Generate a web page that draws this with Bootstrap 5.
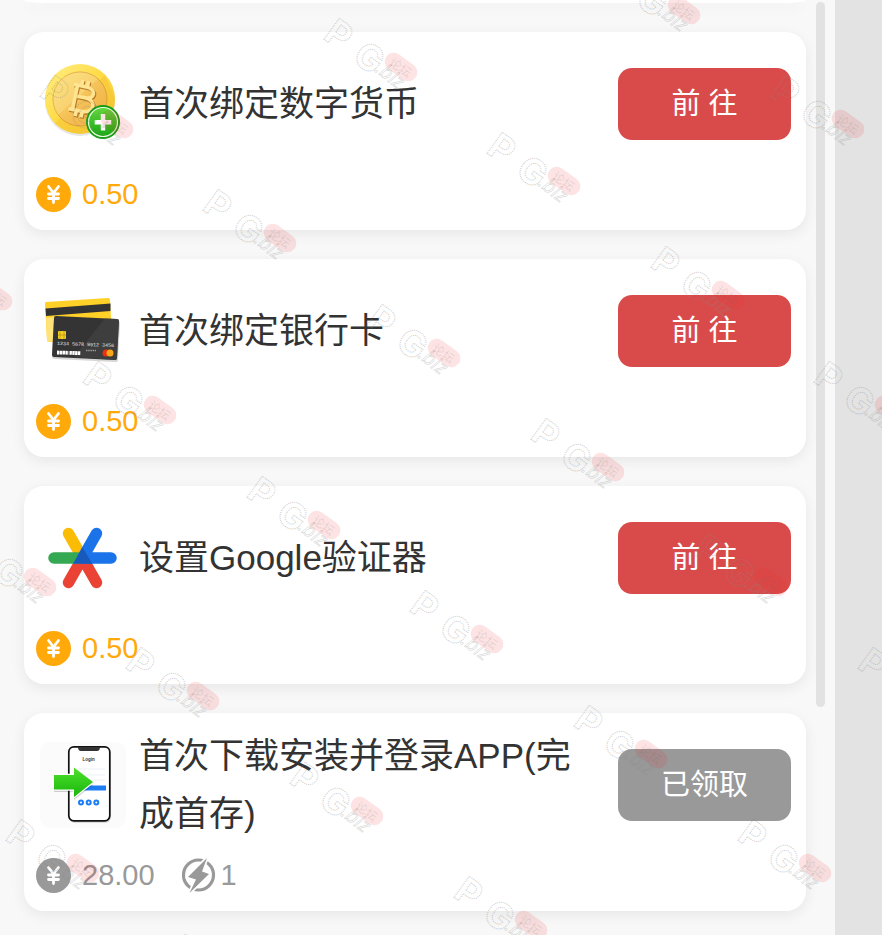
<!DOCTYPE html>
<html lang="zh-CN">
<head>
<meta charset="utf-8">
<meta name="viewport" content="width=device-width, initial-scale=1">
<title>任务</title>
<link rel="stylesheet" href="https://cdn.jsdelivr.net/npm/bootstrap@5.3.0/dist/css/bootstrap.min.css">
<style>
body { background: #e3e3e3; font-family: "Liberation Sans", "Noto Sans CJK SC", sans-serif; color: #333; }
.panel { background: #f8f8f8; margin-right: 47px; padding-left: 24px; padding-right: 10px; gap: 10px; }
.task-list { gap: 29px; min-width: 0; }
.task { background: #fff; border-radius: 20px; box-shadow: 0 4px 14px rgba(0,0,0,.07); height: 198px; padding: 14px 15px 0 12px; flex: none; }
.task-above { height: 3px; border-radius: 0 0 20px 20px / 0 0 3px 3px; padding: 0; margin: 0; }
.task-main { height: 116px; padding-left: 4px; }
.task-icon { width: 86px; height: 86px; flex: none; margin-right: 13px; }
.task-title { font-size: 35px; line-height: 58px; font-weight: 400; margin: 0; padding-right: 24px; }
.btn-task { width: 173px; height: 72px; flex: none; border: 0; border-radius: 14px; font-size: 29px; line-height: 36px; color: #fff; background: #d94b4a; padding: 0; }
.btn-task:hover { color: #fff; background: #c94342; }
.btn-task:disabled { background: #999; color: #fff; opacity: 1; }
.reward { height: 35px; margin-top: 15px; font-size: 29px; line-height: 35px; color: #ffa90a; }
.reward.claimed { color: #999; }
.coin { width: 35px; height: 35px; margin-right: 11px; }
.bolt { width: 35px; height: 35px; margin-left: 27px; margin-right: 4px; }
.thumb { width: 9px; height: calc(75vh + 4px); margin-top: 2px; border-radius: 5px; background: #e2e2e2; flex: none; }
.marks { pointer-events: none; z-index: 5; }
</style>
<script src="https://cdn.jsdelivr.net/npm/bootstrap@5.3.0/dist/js/bootstrap.bundle.min.js"></script>
</head>
<body class="vh-100 overflow-hidden position-relative">

<svg width="0" height="0" class="position-absolute" aria-hidden="true">
  <symbol id="yen" viewBox="0 0 35 35">
    <circle cx="17.500" cy="17.500" r="17.500" fill="currentColor"/>
    <path d="M12.500 9.500l5 6.500 5-6.500M17.500 16v9.500M12.500 17h10M12.500 21.500h10" fill="none" stroke="#fff" stroke-width="2.800" stroke-linecap="round" stroke-linejoin="round"/>
  </symbol>
  <symbol id="bolt" viewBox="0 0 35 35">
    <circle cx="16.500" cy="17" r="15" fill="none" stroke="currentColor" stroke-width="3.200"/>
    <path d="M25 0L6 19l8 2.500L7.500 35 27 16l-7-2.500z" fill="currentColor" stroke="#fff" stroke-width="3.500" paint-order="stroke"/>
  </symbol>
</svg>

<main class="panel d-flex h-100 overflow-hidden">
  <div class="task-list d-flex flex-column flex-grow-1">
    <div class="task task-above"></div>

    <section class="task">
      <div class="task-main d-flex align-items-center">
        <svg class="task-icon" viewBox="0 0 86 86" aria-hidden="true">
          <defs>
            <linearGradient id="gold" x1="0" y1="0" x2="1" y2="1"><stop offset="0" stop-color="#fff08a"/><stop offset=".45" stop-color="#ffdc48"/><stop offset="1" stop-color="#f5c532"/></linearGradient>
            <linearGradient id="amber" x1="0" y1="0" x2="1" y2="1"><stop offset="0" stop-color="#fbe07a"/><stop offset=".5" stop-color="#f5c35a"/><stop offset="1" stop-color="#f1ab3a"/></linearGradient>
            <linearGradient id="leaf" x1="0" y1="0" x2="0" y2="1"><stop offset="0" stop-color="#63d83e"/><stop offset="1" stop-color="#12a90c"/></linearGradient>
          </defs>
          <circle cx="40" cy="40" r="35" fill="#000" opacity=".1"/>
          <circle cx="40" cy="38" r="35" fill="url(#gold)"/>
          <path d="M15 62A35 35 0 0 0 75 38L65 14z" fill="#f2b92b" opacity=".35"/>
          <circle cx="40" cy="38" r="27" fill="url(#amber)" stroke="#dda03a" stroke-width="1"/>
          <path d="M18 54L58 18A27 27 0 0 0 18 54z" fill="#fff0a0" opacity=".3"/>
          <g transform="rotate(12 41 37)" fill="none" stroke-linejoin="round">
            <path d="M31 25h13c11 0 11 11 1 11h-8M45 36c13 0 12 14-1 14H31M35 25v25M39 19v6M45 19v6M39 50v6M45 50v6" stroke="#b97a26" stroke-width="4" transform="translate(1 1)"/>
            <path d="M31 25h13c11 0 11 11 1 11h-8M45 36c13 0 12 14-1 14H31M35 25v25M39 19v6M45 19v6M39 50v6M45 50v6" stroke="#ffe491" stroke-width="3.600"/>
          </g>
          <circle cx="63" cy="61" r="17" fill="#179d14"/>
          <circle cx="63" cy="61" r="14.500" fill="url(#leaf)" stroke="#e8ffe0" stroke-width="1.200"/>
          <path d="M63 53v16.500M54.700 61.200h16.600" stroke="#fff" stroke-width="4.400"/>
        </svg>
        <h2 class="task-title flex-grow-1">首次绑定数字货币</h2>
        <button type="button" class="btn btn-task">前 往</button>
      </div>
      <div class="reward d-flex align-items-center"><svg class="coin" aria-hidden="true"><use href="#yen"/></svg><span>0.50</span></div>
    </section>

    <section class="task">
      <div class="task-main d-flex align-items-center">
        <svg class="task-icon" viewBox="0 0 86 86" aria-hidden="true">
          <path d="M6 14L68 10q2 0 2 2l2 38L9 54q-2 0-2-2L5 16q0-2 1-2z" fill="#ffd028"/>
          <path d="M6 30l8-1v24l-5 1q-2 0-2-2z" fill="#ffe27a"/>
          <path d="M5.500 20.500l65-5v7.500l-64.500 5z" fill="#333"/>
          <path d="M16 30l62 3q2 0 2 2l-2 37q0 2-2 2l-62-3q-2 0-2-2l2-37q0-2 2-2z" fill="#000" opacity=".16"/>
          <path d="M16 28l61 3q2 0 2 2l-2 37q0 2-2 2l-61-3q-2 0-2-2l2-37q0-2 2-2z" fill="#343434"/>
          <path d="M65 30.500L34 69l41 3q2 0 2-2l2-37q0-2-2-2z" fill="#444" opacity=".65"/>
          <rect x="18" y="43" width="8" height="8" rx="1" fill="#f5cf22"/>
          <path d="M20 43v8M24 43v8M18 47h8" stroke="#b28f12" stroke-width=".700"/>
          <text x="17" y="57" font-family="Liberation Mono" font-size="5" fill="#eee" transform="rotate(2 17 57)">1234 5678 9912 3456</text>
          <path d="M17 64.500l11.500 .3M29.500 64.800l11 .4" stroke="#fff" stroke-width="3.800" stroke-dasharray="2.400 .400"/>
          <path d="M46 62.500h10" stroke="#999" stroke-width="1.600" stroke-dasharray="1.500 .700"/>
          <circle cx="66" cy="65" r="3.500" fill="#ee2f14"/><circle cx="70" cy="65" r="3.500" fill="#fca716"/>
        </svg>
        <h2 class="task-title flex-grow-1">首次绑定银行卡</h2>
        <button type="button" class="btn btn-task">前 往</button>
      </div>
      <div class="reward d-flex align-items-center"><svg class="coin" aria-hidden="true"><use href="#yen"/></svg><span>0.50</span></div>
    </section>

    <section class="task">
      <div class="task-main d-flex align-items-center">
        <svg class="task-icon" viewBox="0 0 86 86" aria-hidden="true" fill="none" stroke-width="11.500" stroke-linecap="round">
          <path d="M28.500 18.500L42.500 43" stroke="#fbbc05"/>
          <path d="M28.500 67.500L42.500 43l14 24.500" stroke="#ea4335" stroke-linejoin="round"/>
          <path d="M14 43h24" stroke="#34a853"/>
          <path d="M71 43H42.500l14-24.500" stroke="#1a73e8" stroke-linejoin="round"/>
          <path d="M42.600 32.500L33 48.700h19.200z" fill="#185abc"/>
        </svg>
        <h2 class="task-title flex-grow-1">设置Google验证器</h2>
        <button type="button" class="btn btn-task">前 往</button>
      </div>
      <div class="reward d-flex align-items-center"><svg class="coin" aria-hidden="true"><use href="#yen"/></svg><span>0.50</span></div>
    </section>

    <section class="task">
      <div class="task-main d-flex align-items-center">
        <svg class="task-icon" viewBox="0 0 86 86" aria-hidden="true">
          <defs><linearGradient id="lime" x1="0" y1="0" x2="0" y2="1"><stop offset="0" stop-color="#4fe02b"/><stop offset="1" stop-color="#18b60d"/></linearGradient></defs>
          <rect width="86" height="86" rx="10" fill="#fbfbfb"/>
          <rect x="29" y="6" width="42" height="75" rx="6" fill="#000" opacity=".12"/>
          <rect x="28.800" y="4.800" width="41" height="74" rx="5" fill="#fff" stroke="#111" stroke-width="1.700"/>
          <path d="M38 5h22q0 4-3 4H41q-3 0-3-4z" fill="#333"/>
          <text x="48.700" y="18.500" text-anchor="middle" font-family="Liberation Sans" font-weight="700" font-size="4.500" fill="#333">Login</text>
          <path d="M37 27h28M37 33h28M37 38h28" stroke="#eceff4" stroke-width="1"/>
          <rect x="44" y="43.500" width="22" height="5" fill="#1c7df5"/>
          <g fill="#fff" stroke="#1c7df5" stroke-width="2"><circle cx="41" cy="60.500" r="2"/><circle cx="48.700" cy="60.500" r="2"/><circle cx="56.300" cy="60.500" r="2"/></g>
          <path d="M14 36h20v-7l19 14-19 15v-8H14z" fill="#000" opacity=".18"/>
          <path d="M14 33h20v-7.500L53 40 34 55v-7.500H14z" fill="url(#lime)" stroke="#fff" stroke-width="2.500" paint-order="stroke"/>
        </svg>
        <h2 class="task-title flex-grow-1">首次下载安装并登录APP(完成首存)</h2>
        <button type="button" class="btn btn-task" disabled>已领取</button>
      </div>
      <div class="reward claimed d-flex align-items-center"><svg class="coin" aria-hidden="true"><use href="#yen"/></svg><span>28.00</span><svg class="bolt" aria-hidden="true"><use href="#bolt"/></svg><span>1</span></div>
    </section>
  </div>
  <div class="thumb"></div>
</main>

<!-- Repeating diagonal stamp laid over the whole page -->
<svg class="marks position-absolute top-0 start-0 w-100 h-100" aria-hidden="true">
  <defs>
    <g id="stamp">
      <g fill="none" stroke="#888" stroke-opacity=".4" stroke-width="1.200" stroke-dasharray="1 1" font-family="Inter, sans-serif" font-weight="700" font-size="36">
        <text transform="translate(-79 -29) rotate(36)">P</text>
        <text transform="translate(-50 -7) rotate(36)">G</text>
      </g>
      <text transform="translate(-27 4) rotate(38)" font-family="Open Sans, sans-serif" font-style="italic" font-size="20" fill="none" stroke="#888" stroke-opacity=".3" stroke-width=".700">.biz</text>
      <g transform="rotate(36)">
        <rect x="-18" y="-9" width="36" height="18" rx="9" fill="#ee2a2a" fill-opacity=".13"/>
        <text y="5" text-anchor="middle" font-family="Noto Sans CJK SC, sans-serif" font-size="12" fill="#666" fill-opacity=".16">论坛</text>
      </g>
    </g>
  </defs>
  <use href="#stamp" x="684" y="10"/><use href="#stamp" x="401" y="67"/><use href="#stamp" x="117" y="124"/>
  <use href="#stamp" x="848" y="124"/><use href="#stamp" x="564" y="181"/><use href="#stamp" x="280" y="238"/><use href="#stamp" x="-4" y="296"/>
  <use href="#stamp" x="728" y="295"/><use href="#stamp" x="444" y="353"/><use href="#stamp" x="160" y="410"/>
  <use href="#stamp" x="891" y="410"/><use href="#stamp" x="608" y="467"/><use href="#stamp" x="324" y="525"/><use href="#stamp" x="40" y="582"/>
  <use href="#stamp" x="771" y="582"/><use href="#stamp" x="487" y="639"/><use href="#stamp" x="203" y="696"/>
  <use href="#stamp" x="935" y="696"/><use href="#stamp" x="651" y="754"/><use href="#stamp" x="367" y="811"/><use href="#stamp" x="83" y="868"/>
  <use href="#stamp" x="815" y="868"/><use href="#stamp" x="531" y="925"/><use href="#stamp" x="247" y="983"/>
</svg>
</body>
</html>
